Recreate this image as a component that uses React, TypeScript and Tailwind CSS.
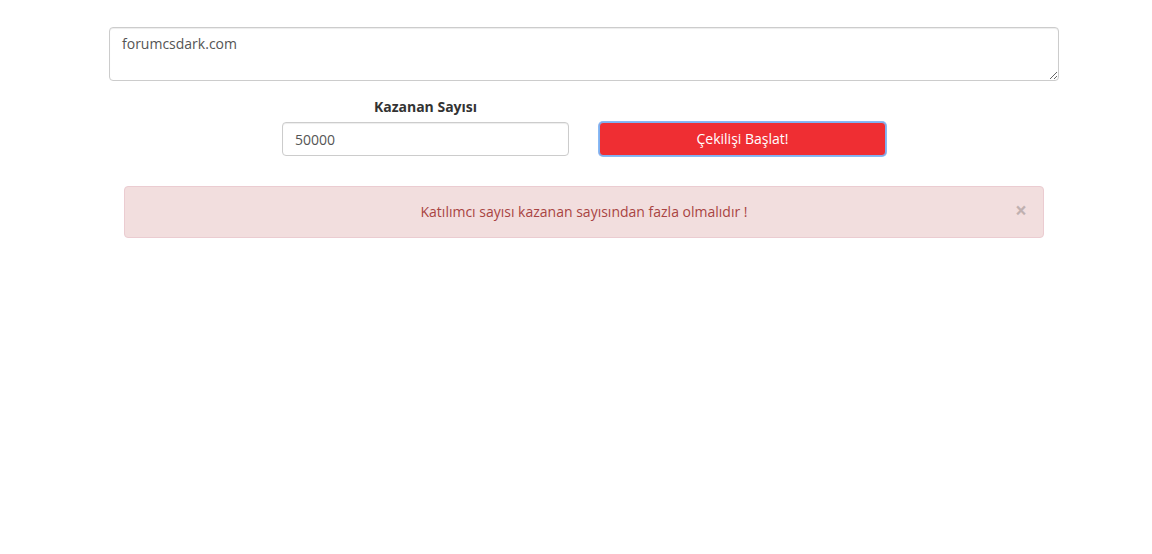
import { useState } from "react";

export default function App() {
  const [participants, setParticipants] = useState("forumcsdark.com");
  const [winners, setWinners] = useState("50000");
  const [showAlert, setShowAlert] = useState(true);

  return (
    <div className="min-h-[554px] bg-white font-['Open_Sans',sans-serif] text-[14px] leading-[20px] text-[#333]">
      <div className="ml-[109px] w-[950px] pt-[27px]">
        <textarea
          rows={2}
          value={participants}
          onChange={(e) => setParticipants(e.target.value)}
          className="block h-[54px] w-full rounded-[4px] border border-[#ccc] px-[12px] py-[6px] text-[#555] shadow-[inset_0_1px_1px_rgba(0,0,0,0.075)] outline-none"
        />

        <div className="mt-[16px] flex justify-center gap-[30px]">
          <div className="flex w-[287px] flex-col">
            <label className="mb-[5px] text-center font-bold text-[#333]">Kazanan Sayısı</label>
            <input
              value={winners}
              onChange={(e) => setWinners(e.target.value)}
              className="h-[34px] w-full rounded-[4px] border border-[#ccc] px-[12px] py-[6px] text-[#555] shadow-[inset_0_1px_1px_rgba(0,0,0,0.075)] outline-none"
            />
          </div>
          <div className="flex w-[287px] flex-col justify-end">
            <button className="h-[34px] w-full rounded-[4px] border border-[#7fb1f1] bg-[#ef2e33] text-white shadow-[0_0_0_1px_#8ab9f3]">
              Çekilişi Başlat!
            </button>
          </div>
        </div>

        {showAlert && (
          <div className="relative mx-[15px] mt-[30px] rounded-[4px] border border-[#ebccd1] bg-[#f2dede] px-[35px] py-[15px] text-center text-[#a94442]">
            Katılımcı sayısı kazanan sayısından fazla olmalıdır !
            <button
              onClick={() => setShowAlert(false)}
              className="absolute right-[16px] top-[13px] text-[21px] font-bold leading-[21px] text-black opacity-20"
            >
              ×
            </button>
          </div>
        )}
      </div>
    </div>
  );
}
